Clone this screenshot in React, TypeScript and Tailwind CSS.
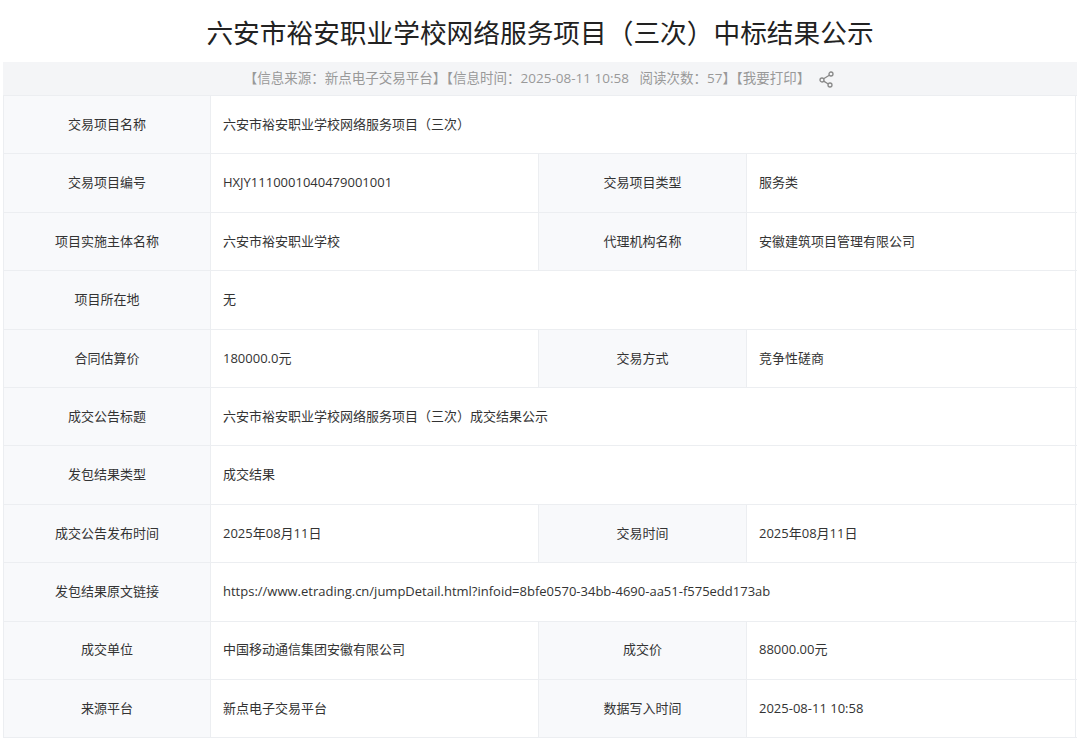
import React from "react";

const rows: [string, string, string?, string?][] = [
  ["交易项目名称", "六安市裕安职业学校网络服务项目（三次）"],
  ["交易项目编号", "HXJY1110001040479001001", "交易项目类型", "服务类"],
  ["项目实施主体名称", "六安市裕安职业学校", "代理机构名称", "安徽建筑项目管理有限公司"],
  ["项目所在地", "无"],
  ["合同估算价", "180000.0元", "交易方式", "竞争性磋商"],
  ["成交公告标题", "六安市裕安职业学校网络服务项目（三次）成交结果公示"],
  ["发包结果类型", "成交结果"],
  ["成交公告发布时间", "2025年08月11日", "交易时间", "2025年08月11日"],
  ["发包结果原文链接", "https://www.etrading.cn/jumpDetail.html?infoid=8bfe0570-34bb-4690-aa51-f575edd173ab"],
  ["成交单位", "中国移动通信集团安徽有限公司", "成交价", "88000.00元"],
  ["来源平台", "新点电子交易平台", "数据写入时间", "2025-08-11 10:58"],
];

const label = "flex items-center justify-center bg-[#f8f9fb] border-r border-[#eceef1]";
const value = "flex items-center pl-3 bg-white border-r border-[#eceef1]";

export default function App() {
  return (
    <div className="w-[1080px] h-[744px] bg-white overflow-hidden text-[#333] text-[13px]" style={{ fontFamily: '"Open Sans", "Noto Sans CJK SC", sans-serif' }}>
      <div className="h-[62px] flex items-center justify-center text-[26.7px] text-[#222] pt-1">六安市裕安职业学校网络服务项目（三次）中标结果公示</div>
      <div className="mx-[3px] h-[33px] bg-[#f4f5f7] flex items-center justify-center text-[#999] text-[13.5px] gap-2">
        <span>【信息来源：新点电子交易平台】【信息时间：2025-08-11 10:58&nbsp;&nbsp;&nbsp;阅读次数：57】【我要打印】</span>
        <svg width="18" height="18" viewBox="0 0 18 18" fill="none" stroke="#888" strokeWidth="1.3">
          <circle cx="13" cy="4" r="2" /><circle cx="4" cy="10" r="2" /><circle cx="12" cy="15" r="2" />
          <path d="M11.3 5.2 5.6 8.8M5.7 11.1l4.6 2.9" />
        </svg>
      </div>
      <div className="mx-[3px] border-l border-t border-[#eceef1]">
        {rows.map((r, i) => (
          <div key={i} className="grid grid-cols-[207px_328px_208px_329px] h-[58.4px] border-b border-[#eceef1]">
            <div className={label}>{r[0]}</div>
            {r[2] ? (
              <>
                <div className={value}>{r[1]}</div>
                <div className={label}>{r[2]}</div>
                <div className={value}>{r[3]}</div>
              </>
            ) : (
              <div className={value + " col-span-3"}>{r[1]}</div>
            )}
          </div>
        ))}
      </div>
    </div>
  );
}
